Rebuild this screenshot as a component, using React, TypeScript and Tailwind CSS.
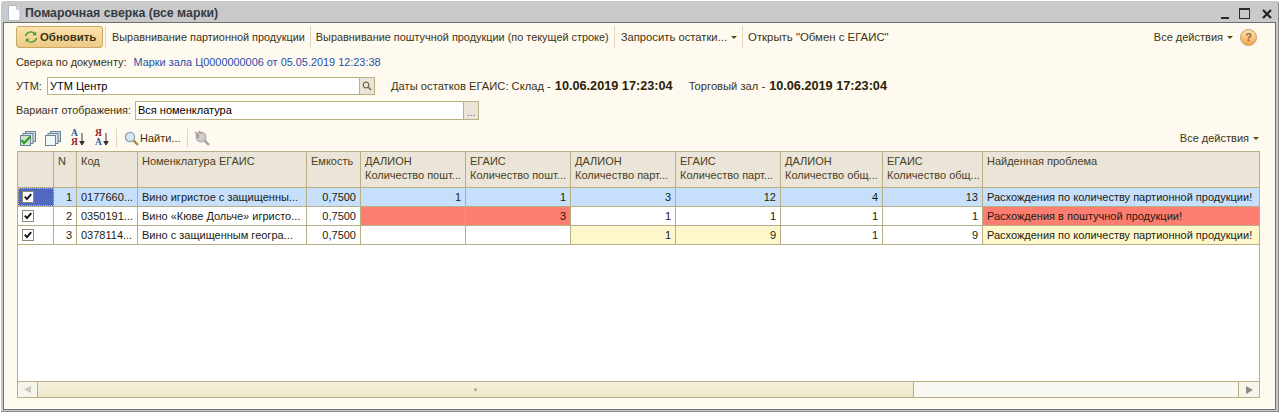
import React from "react";

const Sep = () => <div className="w-px h-[22px] bg-[#e0d8bd] shrink-0" />;
const Caret = () => (
  <svg width="6" height="3" viewBox="0 0 6 3" className="shrink-0"><path d="M0 0h6L3 3z" fill="#5a4a14" /></svg>
);

const Check = () => (
  <div className="w-[12px] h-[12px] border border-[#8f8a6e] bg-white flex items-center justify-center">
    <svg width="8" height="8" viewBox="0 0 8 8"><path d="M.8 3.6l2.2 2.5L7.2 1.2" fill="none" stroke="#111" strokeWidth="1.9" /></svg>
  </div>
);

const gridCols = "grid grid-cols-[36px_23px_61px_169px_54px_105px_105px_105px_105px_102px_100px_1fr]";

const headers: [string, string?][] = [
  ["", ""], ["N"], ["Код"], ["Номенклатура ЕГАИС"], ["Емкость"],
  ["ДАЛИОН", "Количество пошт..."], ["ЕГАИС", "Количество пошт..."],
  ["ДАЛИОН", "Количество парт..."], ["ЕГАИС", "Количество парт..."],
  ["ДАЛИОН", "Количество общ..."], ["ЕГАИС", "Количество общ..."], ["Найденная проблема"],
];

type Row = { vals: string[]; bg: string[] };
const B = "bg-[#c6dffb]", W = "bg-white", R = "bg-[#fd7e70]", Y = "bg-[#fef7cb]";
const rows: Row[] = [
  {
    vals: ["1", "0177660...", "Вино игристое с защищенны...", "0,7500", "1", "1", "3", "12", "4", "13", "Расхождения по количеству партионной продукции!"],
    bg: [B, B, B, B, B, B, B, B, B, B, B],
  },
  {
    vals: ["2", "0350191...", "Вино «Кюве Дольче» игристо...", "0,7500", "", "3", "1", "1", "1", "1", "Расхождения в поштучной продукции!"],
    bg: [W, W, W, W, R, R, W, W, W, W, R],
  },
  {
    vals: ["3", "0378114...", "Вино с защищенным геогра...", "0,7500", "", "", "1", "9", "1", "9", "Расхождения по количеству партионной продукции!"],
    bg: [W, W, W, W, W, W, Y, Y, W, W, Y],
  },
];
const leftAligned = [1, 2, 10];

const Refresh = () => (
  <svg width="14" height="14" viewBox="0 0 14 14" className="shrink-0">
    <path d="M1.5 6a5.4 5.4 0 0 1 9.2-2.4" fill="none" stroke="#3f9a2c" strokeWidth="1.3" />
    <path d="M12.2 1.4v3.8H8.4z" fill="#3f9a2c" />
    <path d="M12.5 8a5.4 5.4 0 0 1-9.2 2.4" fill="none" stroke="#3f9a2c" strokeWidth="1.3" />
    <path d="M1.8 12.6V8.8h3.8z" fill="#3f9a2c" />
  </svg>
);

const Lens = () => (
  <svg width="15" height="15" viewBox="0 0 15 15" className="shrink-0">
    <circle cx="6" cy="6" r="4.6" fill="#d6e8f5" stroke="#8a9aa8" strokeWidth="1.2" />
    <path d="M9.6 9.6L14 14" stroke="#a8843c" strokeWidth="2.4" />
  </svg>
);

const PlugLens = () => (
  <svg width="16" height="16" viewBox="0 0 16 16" className="shrink-0">
    <circle cx="7" cy="7" r="4.8" fill="#cfcfcf" stroke="#a8a8a8" strokeWidth="1.2" />
    <path d="M10.6 10.6L15 15" stroke="#a5a09a" strokeWidth="2.4" />
    <path d="M1 2l4 4M4.5 1l3 3M2 5l3 3" stroke="#b49a9a" strokeWidth="1.6" />
  </svg>
);

const Stack = ({ checked }: { checked?: boolean }) => (
  <svg width="16" height="15" viewBox="0 0 16 15">
    <rect x="5.5" y="0.5" width="10" height="10" fill="#cfdbe6" stroke="#6a8296" />
    <rect x="3" y="2.5" width="10" height="10" fill="#dfe7ee" stroke="#6a8296" />
    <rect x="0.5" y="4.5" width="10" height="10" fill={checked ? "#cfe6c8" : "#f4f7fa"} stroke="#6a8296" />
    {checked && <path d="M1.5 9l2.5 3L10.5 5.5" fill="none" stroke="#2e9a2a" strokeWidth="2.2" />}
  </svg>
);

const Sort = ({ desc }: { desc?: boolean }) => (
  <div className="flex items-center w-[15px] h-[18px]">
    <div className="flex flex-col items-center w-[9px] font-['Liberation_Serif',serif] font-bold text-[9.5px] leading-[9px]">
      <div className={desc ? "text-[#9a2020]" : "text-[#2a5a9a]"}>{desc ? "Я" : "А"}</div>
      <div className={desc ? "text-[#2a5a9a]" : "text-[#9a2020]"}>{desc ? "А" : "Я"}</div>
    </div>
    <svg width="6" height="15" viewBox="0 0 6 15" className="shrink-0">
      <path d="M3 2v10M.8 10.5L3 14l2.2-3.5z" fill="#333" stroke="#333" strokeWidth="1" />
    </svg>
  </div>
);

export default function App() {
  return (
    <div className="w-[1281px] h-[414px] bg-white pl-px pt-px font-['Liberation_Sans',Arial,sans-serif] text-[11px] leading-[13px] text-[#3d3212] overflow-hidden">
      <div className="w-[1278px] h-[411px] bg-[#c9c9c9] rounded-t-[3px] px-[2px] pb-[1px] border-b border-r border-[#8a8a8a] flex flex-col">
        {/* title bar */}
        <div className="h-[21px] flex items-center pl-[4px] pr-[4px] shrink-0">
          <svg width="14" height="16" viewBox="0 0 14 16" className="shrink-0 mt-[2px]">
            <path d="M1.5 .5h8l3.5 3.5v11.5h-11.5z" fill="#fbfdff" stroke="#a9bccd" />
            <path d="M9.5 .5v3.5h3.5" fill="#dfe9f2" stroke="#a9bccd" />
          </svg>
          <span className="ml-[4px] mt-[3px] text-[12.3px] font-bold text-[#333b44]">Помарочная сверка (все марки)</span>
          <div className="ml-auto flex items-center mt-[4px]">
            <div className="w-[8px] h-[2px] bg-[#2b2b2b] mt-[9px]" />
            <div className="ml-[10px] w-[11px] h-[11px] border border-[#2b2b2b] border-t-2" />
            <svg width="10" height="10" viewBox="0 0 10 10" className="ml-[12px]"><path d="M1 1l8 8M9 1l-8 8" stroke="#222" strokeWidth="2.2" /></svg>
          </div>
        </div>

        {/* content */}
        <div className="flex-1 bg-[#fefaf0] border border-[#6f6f6f] pl-[12px] pr-[16px] flex flex-col min-h-0">
          {/* toolbar */}
          <div className="h-[22px] mt-[3px] flex items-center shrink-0 text-[10.9px]">
            <div className="w-[87px] h-[22px] rounded-[3px] border border-[#c9a868] bg-gradient-to-b from-[#fbe3ae] to-[#eec987] flex items-center pl-[7px] gap-[2px] font-bold text-[#3f3512] text-[11.4px]">
              <Refresh />
              <span>Обновить</span>
            </div>
            <div className="ml-[2px]"><Sep /></div>
            <span className="ml-[6px] whitespace-nowrap">Выравнивание партионной продукции</span>
            <div className="ml-[5px]"><Sep /></div>
            <span className="ml-[5px] whitespace-nowrap">Выравнивание поштучной продукции (по текущей строке)</span>
            <div className="ml-[5px]"><Sep /></div>
            <span className="ml-[6px] whitespace-nowrap text-[11.25px]">Запросить остатки...</span>
            <div className="ml-[4px]"><Caret /></div>
            <div className="ml-[5px]"><Sep /></div>
            <span className="ml-[5px] whitespace-nowrap text-[11.4px]">Открыть "Обмен с ЕГАИС"</span>
            <span className="ml-auto whitespace-nowrap text-[11px]">Все действия</span>
            <div className="ml-[4px]"><Caret /></div>
            <div className="ml-[7px] mr-[2px] w-[17px] h-[17px] rounded-full border border-[#c99a5a] bg-gradient-to-b from-[#fde2b4] to-[#f0a64c] flex items-center justify-center text-[11px] font-bold text-[#8a6a3a]">?</div>
          </div>

          {/* doc row */}
          <div className="h-[14px] mt-[7px] flex items-center shrink-0 text-[10.9px]">
            <span className="whitespace-nowrap">Сверка по документу:</span>
            <span className="ml-[7px] whitespace-nowrap text-[#1f4fa8]">Марки зала Ц0000000006 от 05.05.2019 12:23:38</span>
          </div>

          {/* UTM row */}
          <div className="h-[18px] mt-[8px] flex items-center shrink-0">
            <span className="w-[31px]">УТМ:</span>
            <div className="w-[328px] h-[18px] border border-[#b8af85] bg-white flex items-center">
              <span className="pl-[2px] flex-1 text-black">УТМ Центр</span>
              <div className="w-[15px] h-full bg-[#ebe5d9] border-l border-[#b8af85] flex items-center justify-center">
                <svg width="10" height="10" viewBox="0 0 10 10"><circle cx="4" cy="4" r="2.8" fill="none" stroke="#6f6a50" strokeWidth="1.2" /><path d="M6 6l3 3" stroke="#6f6a50" strokeWidth="1.6" /></svg>
              </div>
            </div>
            <span className="ml-[16px] whitespace-nowrap text-[11.2px]">Даты остатков ЕГАИС: Склад -</span>
            <span className="ml-[4px] text-[12.7px] font-bold text-[#2a2208] whitespace-nowrap">10.06.2019 17:23:04</span>
            <span className="ml-[16px] whitespace-nowrap text-[11.2px]">Торговый зал -</span>
            <span className="ml-[4px] text-[12.7px] font-bold text-[#2a2208] whitespace-nowrap">10.06.2019 17:23:04</span>
          </div>

          {/* variant row */}
          <div className="h-[19px] mt-[6px] flex items-center shrink-0">
            <span className="w-[119px] whitespace-nowrap text-[10.9px]">Вариант отображения:</span>
            <div className="w-[344px] h-[19px] border border-[#b8af85] bg-white flex items-center">
              <span className="pl-[2px] flex-1 text-black">Вся номенклатура</span>
              <div className="w-[15px] h-full bg-[#ebe5d9] border-l border-[#b8af85] flex items-center justify-center text-[#6f6a50] leading-none pt-[3px]">...</div>
            </div>
          </div>

          {/* grid toolbar */}
          <div className="h-[22px] mt-[7px] flex items-center shrink-0 pl-[4px]">
            <Stack checked />
            <div className="ml-[9px]"><Stack /></div>
            <div className="ml-[9px]"><Sort /></div>
            <div className="ml-[9px]"><Sort desc /></div>
            <div className="ml-[7px] w-px h-[18px] bg-[#e0d8bd]" />
            <div className="ml-[7px]"><Lens /></div>
            <span className="ml-[1px]">Найти...</span>
            <div className="ml-[6px] w-px h-[18px] bg-[#e0d8bd]" />
            <div className="ml-[6px]"><PlugLens /></div>
            <span className="ml-auto whitespace-nowrap">Все действия</span>
            <div className="ml-[4px]"><Caret /></div>
          </div>

          {/* grid */}
          <div className="mt-[2px] ml-[1px] w-[1243px] h-[247px] border border-[#b8af85] bg-white flex flex-col shrink-0">
            <div className={gridCols + " h-[36px] bg-[#ebe5d9] border-b border-[#b8af85] shrink-0"}>
              {headers.map((h, i) => (
                <div key={i} className={"px-[4px] pt-[2px] leading-[14px] whitespace-nowrap overflow-hidden text-[#4a4020] " + (i < 11 ? "border-r border-[#b8af85]" : "")}>
                  <div>{h[0]}</div>
                  {h[1] && <div>{h[1]}</div>}
                </div>
              ))}
            </div>
            {rows.map((r, ri) => (
              <div key={ri} className={gridCols + " h-[19px] border-b border-[#b8af85] shrink-0"}>
                <div className={"flex items-center " + (ri === 0 ? "bg-[#5068c0] border border-dotted border-[#c8c070] pl-[3px]" : "bg-white border-r border-[#b8af85] pl-[4px]")}>
                  <Check />
                </div>
                {r.vals.map((v, i) => (
                  <div
                    key={i}
                    className={
                      r.bg[i] + " h-[18px] flex items-center px-[4px] whitespace-nowrap overflow-hidden text-[#1c1c10] " +
                      (leftAligned.includes(i) ? "justify-start " : "justify-end ") +
                      (i < 10 ? "border-r border-[#b8af85]" : "")
                    }
                  >
                    {v}
                  </div>
                ))}
              </div>
            ))}
            <div className="flex-1" />
            {/* scrollbar */}
            <div className="h-[16px] border-t border-[#b8af85] flex shrink-0">
              <div className="w-[20px] border-r border-[#b8af85] bg-[#f6f5ec] flex items-center justify-center">
                <svg width="7" height="7" viewBox="0 0 7 7"><path d="M7 0v7L0 3.5z" fill="#c9c9c0" /></svg>
              </div>
              <div className="w-[876px] border-r border-[#b8af85] bg-gradient-to-b from-[#f6f2dc] to-[#ece6c8] flex items-center justify-center">
                <div className="w-[3px] h-[3px] rounded-full bg-[#a9a99a]" />
              </div>
              <div className="flex-1 bg-[#f8f7f1]" />
              <div className="w-[21px] border-l border-[#b8af85] bg-[#f6f5ec] flex items-center justify-center">
                <svg width="7" height="8" viewBox="0 0 7 8"><path d="M0 0v8l7-4z" fill="#8a8a8a" /></svg>
              </div>
            </div>
          </div>
        </div>
      </div>
    </div>
  );
}
